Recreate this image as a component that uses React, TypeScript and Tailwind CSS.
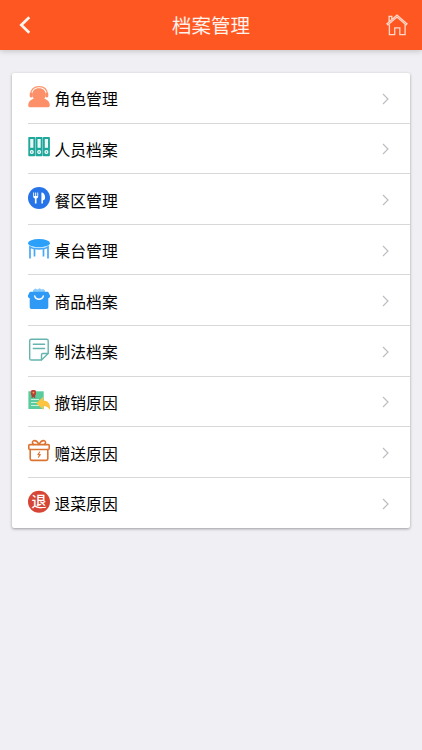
import React from "react";

const RoleIcon = () => (
  <>
    <path d="M2.600 9C2.600 3.400 6 .6 11 .6s8.400 2.800 8.400 8.400" fill="none" stroke="#fa9870" strokeWidth="1.300" />
    <rect x="1.700" y="6.600" width="3" height="4.800" rx="1.300" fill="#fb8f66" />
    <rect x="17.300" y="6.600" width="3" height="4.800" rx="1.300" fill="#fb8f66" />
    <path d="M11 2.200c4.300 0 6.700 2.700 6.700 6.300 0 1.700-.5 3-1.500 4.100 3.500 1.300 5.600 3.400 5.600 6.700 0 1.400-.8 2-2 2H2.200c-1.200 0-2-.6-2-2 0-3.300 2.100-5.400 5.600-6.700-1-1.100-1.500-2.400-1.500-4.100 0-3.600 2.400-6.300 6.700-6.300z" fill="#fd9068" />
  </>
);

const BindersIcon = () => (
  <>
    {[0.3, 7.6, 14.9].map((x) => (
      <g key={x}>
        <rect x={x} y="1" width="7" height="19.300" rx=".8" fill="#20a79c" />
        <rect x={x + 1.9} y="3" width="3.200" height="8.800" fill="#e9f7f5" />
        <circle cx={x + 3.500} cy="16" r="2" fill="#fff" />
        <circle cx={x + 3.500} cy="16" r=".8" fill="#20a79c" />
      </g>
    ))}
  </>
);

const DiningIcon = () => (
  <>
    <circle cx="11" cy="11" r="11" fill="#2774e8" />
    <path d="M5.200 5.500v3.700c0 1.400.8 2.100 1.700 2.300v5h1.600v-5c.9-.2 1.700-.9 1.700-2.300V5.500h-.9v3.600h-1.100V5.500h-1v3.600H6.100V5.500zM13.400 5.400v11.200h1.500v-3.100c1.500-.3 2.200-1.300 2.200-3.200 0-2.800-1.400-4.900-3.700-4.900z" fill="#fff" />
  </>
);

const TableIcon = () => (
  <>
    <path d="M2 7.500v13.100M6.500 10v8.400M15.500 10v8.400M20 7.500v13.100" fill="none" stroke="#48a8f8" strokeWidth="1.700" />
    <path d="M1.800 9.200c4.800 2.300 13.600 2.300 18.400 0" fill="none" stroke="#48a8f8" strokeWidth="1.800" />
    <ellipse cx="11" cy="5.200" rx="11" ry="4.100" fill="#2aa0fa" />
    <path d="M.5 6.900c3.400 3.600 17.600 3.600 21 0" fill="none" stroke="#a9dafb" strokeWidth=".7" />
  </>
);

const BagIcon = () => (
  <>
    <path d="M5 5V2.200L7.300.6l2.200.9L11.500.2l2.200 1.300 1.700-.5L17 2.600V5z" fill="#8acbfa" />
    <path d="M2.600 3.700h16.800c.6 0 .9.200 1.200.7L22 7.600c.3 1.300-.2 2.300-1.700 2.600v8.900c0 1.200-.7 1.900-1.900 1.900H3.600c-1.200 0-1.900-.7-1.900-1.900v-8.900C.2 9.900-.3 8.900 0 7.600l1.400-3.200c.3-.5.6-.7 1.200-.7z" fill="#2f9af5" />
    <path d="M6.700 8c1.100 4.300 7.500 4.300 8.600 0" fill="none" stroke="#fff" strokeWidth="1.400" strokeLinecap="round" />
  </>
);

const NoteIcon = () => (
  <g fill="none" stroke="#64b5af" strokeWidth="1.400" strokeLinejoin="round" strokeLinecap="round">
    <path d="M3.300.2h15.300c1 0 1.600.6 1.600 1.600v12.700L13.500 21H3.300c-1 0-1.600-.6-1.600-1.600V1.800c0-1 .6-1.600 1.600-1.600z" />
    <path d="M13.500 20.700v-4.900c0-.9.400-1.300 1.300-1.300h5M5.300 5.300h11.300M5.300 9.500h11.300" />
  </g>
);

const RevokeIcon = () => (
  <>
    <path d="M.4 2.300h15.300V20H.4z" fill="#5acb9d" />
    <path d="M3 10.500h8M3 13.500h6M3 16.500h8" stroke="#c9f0da" strokeWidth="1.100" />
    <rect x="2.800" y="1" width="5.200" height="5.200" rx="1.500" fill="#bf4338" />
    <circle cx="5.400" cy="3.600" r=".9" fill="#edb15a" />
    <path d="M3.600 5.800h3.600v3.400l-1.800-1.100-1.800 1.100z" fill="#a64337" />
    <path d="M15.200 7.800v3.600c5.400.2 7.500 3.900 6.700 9.600-1.500-2.700-3.600-4-6.700-4v3.700L8.300 14.200z" fill="#fdc441" />
  </>
);

const GiftIcon = () => (
  <g fill="none" stroke="#dc7431" strokeWidth="1.600" strokeLinejoin="round" strokeLinecap="round">
    <rect x=".8" y="4.600" width="20.400" height="4.900" rx="1" />
    <path d="M2.200 9.500v9.300c0 1 .6 1.600 1.600 1.600h14.400c1 0 1.600-.6 1.600-1.600V9.500" />
    <path d="M11 4.500C9.700 2 7.500.3 5.700.8c-1.800.6-1.600 2.900 0 3.700M11 4.500C12.300 2 14.500.3 16.300.8c1.800.6 1.600 2.900 0 3.700" />
    <path d="M11.700 12 9.900 14.600h2.400l-1.900 2.700" strokeWidth="1.100" />
  </g>
);

const ReturnIcon = () => (
  <>
    <circle cx="11" cy="10.700" r="11" fill="#d64535" />
    <text x="11" y="16.200" textAnchor="middle" fill="#fff" fontSize="15" fontWeight="500">退</text>
  </>
);

const items = [
  { label: "角色管理", Icon: RoleIcon },
  { label: "人员档案", Icon: BindersIcon },
  { label: "餐区管理", Icon: DiningIcon },
  { label: "桌台管理", Icon: TableIcon },
  { label: "商品档案", Icon: BagIcon },
  { label: "制法档案", Icon: NoteIcon },
  { label: "撤销原因", Icon: RevokeIcon },
  { label: "赠送原因", Icon: GiftIcon },
  { label: "退菜原因", Icon: ReturnIcon },
];

export default function App() {
  return (
    <div className="min-h-screen bg-[#efeff4] font-['Noto_Sans_CJK_SC',sans-serif] text-black">
      <header className="flex h-[49.500px] items-center justify-between bg-[#ff5722] pr-[14px] pl-[18px] shadow-[0_1px_6px_rgba(0,0,0,0.2)]">
        <button aria-label="返回" className="flex w-[18px]">
          <svg className="shrink-0" width="14" height="18" viewBox="0 0 14 18" fill="none" stroke="#fff4ee" strokeWidth="2.700">
            <path d="m11.300 1.300-8 7.700 8 7.700" />
          </svg>
        </button>
        <h1 className="text-[19.500px] leading-[28px] font-normal text-[#fff3ed]">档案管理</h1>
        <button aria-label="首页" className="flex">
          <svg width="22" height="22" viewBox="0 0 22 22" fill="none" stroke="#ffd9ca" strokeWidth="1.300">
            <path d="M3.400 10.500v10.100h5.300v-6.800h5.100v6.800h5.300V10.500" />
            <path d="M1 9.700 11 1l10 8.700-1 1.200-9-7.800-9 7.800zM3.100 7.800V2.300h2.700v3.200" />
          </svg>
        </button>
      </header>
      <main className="pt-[23.500px] pr-[12px] pl-[11.500px]">
        <ul className="rounded-[2px] bg-white pl-4 shadow-[0_1px_3px_rgba(0,0,0,0.35)]">
          {items.map(({ label, Icon }) => (
            <li key={label} className="flex h-[50.600px] items-center border-b border-[#d8d8da] pr-[20.500px] last:border-transparent">
              <svg className="mb-[2px] shrink-0 overflow-visible" width="22" height="22" viewBox="0 0 22 22">
                <Icon />
              </svg>
              <span className="mt-[3.400px] ml-[5px] flex-1 text-[15.800px] leading-6">{label}</span>
              <svg className="mt-[2px]" width="9" height="12" viewBox="0 0 9 12" fill="none" stroke="#bebec2" strokeWidth="1.200">
                <path d="m2 1 5 5-5 5" />
              </svg>
            </li>
          ))}
        </ul>
      </main>
    </div>
  );
}
